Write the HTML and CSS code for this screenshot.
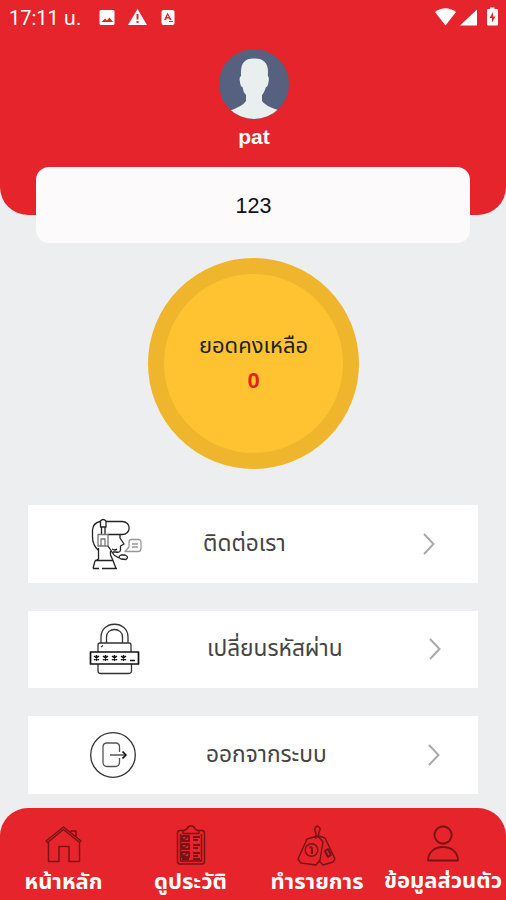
FILE: index.html
```html
<!DOCTYPE html>
<html lang="th">
<head>
<meta charset="utf-8">
<meta name="viewport" content="width=device-width, initial-scale=1">
<title>pat</title>
<link rel="stylesheet" href="styles.css">
</head>
<body>
<div class="app">
  <header class="header">
    <div class="status">
      <span class="time">17:11 น.</span>
      <svg class="status-left" width="80" height="20" viewBox="0 0 80 20" fill="#fff">
        <path fill-rule="evenodd" d="M3 2h12q1.500 0 1.500 1.500v12q0 1.500-1.500 1.500H3q-1.500 0-1.500-1.500v-12Q1.500 2 3 2zM3.500 14h11.500l-3.500-4.500-2.500 3-2-2z"/>
        <path fill-rule="evenodd" d="M39.500 1l9.500 16H30zM38.500 6v5.500h2V6zm0 7v2h2v-2z"/>
        <path fill-rule="evenodd" d="M65.500 2h9q2 0 2 2v11q0 2-2 2h-9q-2 0-2-2V4q0-2 2-2zM69.500 4.500L66 12h2l.6-1.600h2.500l.6 1.600h2zm.3 2.500l.8 2h-1.600zM71 14h4v-1h-4z"/>
      </svg>
      <svg class="status-right" width="68" height="22" viewBox="0 0 68 22" fill="#fff">
        <path d="M1 4Q11.500-3.500 22 4L11.500 17.500z"/>
        <path d="M43 1.500v16H26z"/>
        <path fill-rule="evenodd" d="M56 1V-.5h4.500V1H63q1 0 1 1v14.500q0 1-1 1h-9q-1 0-1-1V2q0-1 1-1zm3 3l-3.500 6h2.500v4.500l3.500-6H59z"/>
      </svg>
    </div>
    <svg class="avatar" width="70" height="70" viewBox="0 0 70 70">
      <defs><clipPath id="disc"><circle cx="35" cy="35" r="35"/></clipPath></defs>
      <g clip-path="url(#disc)">
        <path fill="#56617f" d="M0 0h70v70H0z"/>
        <path fill="#e9efef" d="M22 23Q22 9 35 9.500Q49 9 49 23L48.800 27Q50.500 28 49.500 33Q48.800 38 47 38Q45 44 43 46V52Q46 57 59 61L62 74H8L10 62Q24 57 27 52V46Q24 43 23.500 38Q21.500 38 20.800 32Q20 28 22 27z"/>
      </g>
    </svg>
    <h1 class="name">pat</h1>
  </header>

  <section class="code-card">123</section>

  <section class="balance">
    <div class="balance-label">ยอดคงเหลือ</div>
    <div class="balance-value">0</div>
  </section>

  <main class="menu">
    <a class="row contact">
      <svg class="row-icon" width="54" height="54" viewBox="0 0 54 54" fill="none" stroke="#222" stroke-width="1.300" stroke-linejoin="round">
        <path d="M12 4.500Q5 6 4.500 13V20Q4.500 28 10.500 33.500M18 4.500H34C43.500 4.500 43.500 17.500 34 17.500H20M12.500 4Q15 1 18 4V10H12.500zM13.500 10V17M17 10V17"/>
        <path stroke="#777" d="M10 17.500H20V29H10zM13 29V22H17V29"/>
        <path d="M32 17.500V21L36 27L32.500 29V33Q32 36 28 35H25M20 29L26 38M24 32Q27 34 29 32M10.500 31V42L7 44L5 51.500M7 43.500H25L28 51.500M5 51.500H11M14 51.500H29M22.500 34V38L25 43.500M26 38L31 41M37 38Q41.500 40 38 42.500L33 42Q29 40 33 38z"/>
        <path stroke="#999" d="M43 22.500H50Q53 22.500 53 25.500V31.500Q53 34.500 50 34.500H37L41 30V25.500Q41 22.500 43 22.500M44 27H50M44 30H50"/>
      </svg>
      <span class="row-label">ติดต่อเรา</span>
      <svg class="chevron" width="14" height="24" viewBox="0 0 14 24"><path d="M2 2l9.500 10L2 22"/></svg>
    </a>
    <a class="row password">
      <svg class="row-icon" width="54" height="54" viewBox="0 0 54 54" fill="none" stroke="#333" stroke-width="1.300" stroke-linejoin="round">
        <path d="M13 21V15C13 -2 40 -2 40 15V21M18.500 21V15C18.500 5 34.500 5 34.500 15V21M10 30V23Q10 21 12 21H41Q43 21 43 23V30M13 25L15 23.500M10 42V49Q10 51.500 13 51.500H40Q43.500 51.500 43.500 49V42"/>
        <path stroke="#111" stroke-width="1.700" d="M2.500 30H50.500V42H2.500z"/>
        <path stroke="#111" stroke-width="1.500" d="M6 34l5 4m0-4l-5 4m2.500-5v6M15 34l5 4m0-4l-5 4m2.500-5v6M24 34l5 4m0-4l-5 4m2.500-5v6M33 34l5 4m0-4l-5 4m2.500-5v6M42 38.500h5"/>
      </svg>
      <span class="row-label">เปลี่ยนรหัสผ่าน</span>
      <svg class="chevron" width="14" height="24" viewBox="0 0 14 24"><path d="M2 2l9.500 10L2 22"/></svg>
    </a>
    <a class="row logout">
      <svg class="row-icon" width="54" height="54" viewBox="0 0 54 54" fill="none" stroke="#333" stroke-width="1.300" stroke-linejoin="round">
        <circle cx="25" cy="27" r="22.300"/>
        <path stroke="#555" d="M31.500 24V19Q31.500 15 27.500 15H19Q15 15 15 19V34Q15 38.500 19 38.500H27.500Q31.500 38.500 31.500 34V30M22 27H37"/>
        <path stroke="#111" stroke-width="1.700" d="M34.500 23.500L38 27L34.500 30.500"/>
      </svg>
      <span class="row-label">ออกจากระบบ</span>
      <svg class="chevron" width="14" height="24" viewBox="0 0 14 24"><path d="M2 2l9.500 10L2 22"/></svg>
    </a>
  </main>

  <nav class="tabs">
    <a class="tab tab-home">
      <svg width="40" height="42" viewBox="0 0 40 42">
        <path d="M2 17L19.500 3L37 17L35.500 18.500L19.500 5.500L3.500 18.500zM4.500 18V37.500H15V22.500H25V37.500H35.500V18M27 8V7H32V12.500"/>
      </svg>
      <span>หน้าหลัก</span>
    </a>
    <a class="tab tab-history">
      <svg width="40" height="42" viewBox="0 0 40 42">
        <path d="M14 6.500H9Q6.500 6.500 6.500 9V37.500Q6.500 40 9 40H31Q33.500 40 33.500 37.500V9Q33.500 6.500 31 6.500H26M12 9.500V7L16 5Q17 1.500 20 2Q23 1.500 24 5L28 7V9.500zM9.500 10V37H30.500V10M11 14l2 2 4-4M11 22l2 2 4-4M11 30l2 2 4-4"/>
        <path stroke-width="1.800" d="M11 12h7v5h-7zM22 13h7M22 16h5M11 20h7v5h-7zM22 21h7M22 24h5M11 28h7v5h-7zM22 29h7M22 32h5M11 35h7M22 35h7"/>
      </svg>
      <span>ดูประวัติ</span>
    </a>
    <a class="tab tab-work">
      <svg width="42" height="42" viewBox="0 0 42 42">
        <path d="M18 13L11 15L2 35L5 39L20 41L24 36L27 18L22 12zM23 12L29 14L39 35L37 38L27 41L23 37M20 15V9Q17 5 21 2Q26 4 23 8L22 14"/>
        <circle cx="15.500" cy="26" r="6.300"/>
        <path stroke-width="2" d="M13.500 23.500Q16 22.500 16 25V30M29 27l3-2 3 6-3 2z"/>
      </svg>
      <span>ทำรายการ</span>
    </a>
    <a class="tab tab-profile">
      <svg width="40" height="42" viewBox="0 0 40 42">
        <path stroke-width="1.800" d="M20 2.500a8.500 8.500 0 1 0 .1 0zM5 36.500C5 18.500 35 18.500 35 36.500z"/>
      </svg>
      <span>ข้อมูลส่วนตัว</span>
    </a>
  </nav>
</div>
</body>
</html>
```
FILE: styles.css
```css
* { box-sizing: border-box; }
body {
  margin: 0;
  background: #eceeef;
  font-family: "Liberation Sans", "Noto Sans Thai", sans-serif;
}
.app {
  width: 506px;
  height: 900px;
  display: flex;
  flex-direction: column;
  align-items: center;
  overflow: hidden;
}
.header {
  flex: none;
  width: 100%;
  height: 215px;
  background: #e5242b;
  border-radius: 0 0 28px 28px;
  display: flex;
  flex-direction: column;
  align-items: center;
}
.status {
  width: 100%;
  height: 49px;
  padding: 8px 4px 0 9px;
  display: flex;
  align-items: flex-start;
  color: #fff;
}
.time {
  width: 89px;
  font: 20px/21px Roboto, "Noto Sans Thai", sans-serif;
  white-space: nowrap;
}
.status-right { margin-left: auto; overflow: visible; }
.avatar { flex: none; margin-left: 2px; }
.name {
  margin: 5px 0 0 2px;
  color: #fff;
  font-size: 21px;
  line-height: 26px;
}
.code-card {
  flex: none;
  width: 434px;
  height: 76px;
  margin-top: -48px;
  padding: 3px 0 0 1px;
  border-radius: 13px;
  background: #fcfafb;
  color: #111;
  display: flex;
  align-items: center;
  justify-content: center;
  font-size: 21.500px;
}
.balance {
  flex: none;
  width: 211px;
  height: 211px;
  margin: 15px 0 0 1px;
  border: 16px solid #efb52c;
  border-radius: 50%;
  background: #ffc331;
  text-align: center;
  padding-top: 56px;
  color: #222;
}
.balance-label { font-size: 22px; line-height: 32px; white-space: nowrap; }
.balance-value { color: #e2231a; font-size: 22px; line-height: 38px; font-weight: bold; }
.menu {
  width: 450px;
  margin-top: 36px;
  display: flex;
  flex-direction: column;
  gap: 28px;
  flex: none;
}
.row {
  height: 77.500px;
  background: #fff;
  display: flex;
  align-items: center;
  padding-left: 60px;
  color: #444;
}
.row-label {
  width: 219px;
  margin-left: 61px;
  padding-bottom: 2px;
  font-size: 22.700px;
  line-height: 34px;
  white-space: nowrap;
}
.password .row-label { width: 221px; margin-left: 65px; }
.logout .row-label { width: 221px; margin-left: 64px; }
.chevron { fill: none; stroke: #aaa; stroke-width: 2; }
.tabs {
  flex: none;
  width: 100%;
  height: 93px;
  margin-top: 14px;
  background: #e5242b;
  border-radius: 28px 28px 0 0;
  display: grid;
  grid-template-columns: 127px 127px 126px 126px;
  padding-top: 16px;
}
.tab {
  display: flex;
  flex-direction: column;
  align-items: center;
  color: #fff;
  font-weight: bold;
  font-size: 22px;
  line-height: 31px;
  white-space: nowrap;
}
.tab-profile { line-height: 29px; }
.tab svg {
  flex: none;
  fill: none;
  stroke: #791216;
  stroke-width: 1.400;
  stroke-linejoin: round;
}
```
